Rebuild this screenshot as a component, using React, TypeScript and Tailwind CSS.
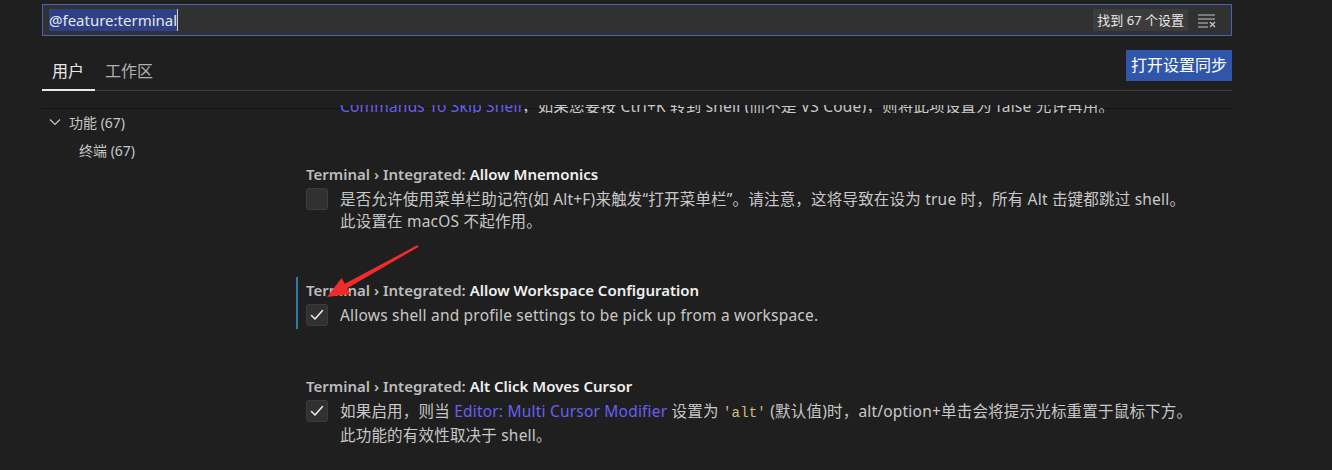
import React from "react";

const font = "font-['Segoe_UI','Noto_Sans','Noto_Sans_CJK_SC',sans-serif]";

const Checkbox = ({ checked }: { checked?: boolean }) => {
  return (
    <div className="w-[22px] h-[22px] shrink-0 rounded-[3px] bg-[#313131] border border-[#3c3c3c] flex items-center justify-center">
      {checked && (
        <svg width="16" height="16" viewBox="0 0 16 16" fill="none">
          <path d="M2.5 8.5 L6 12 L13.5 3.5" stroke="#e8e8e8" strokeWidth="1.6" strokeLinecap="round" strokeLinejoin="round" />
        </svg>
      )}
    </div>
  );
};

const Setting = ({
  name,
  focused,
  checked,
  lines,
}: {
  name: string;
  focused?: boolean;
  checked?: boolean;
  lines: React.ReactNode[];
}) => {
  return (
    <div className={`border-l-2 pl-[8px] py-[3px] ${focused ? "border-[#2a7ca3]" : "border-transparent"}`}>
      <div className="h-[20px] leading-[20px] text-[15px] whitespace-nowrap">
        <span className="text-[#bdbdbd] font-semibold">Terminal › Integrated: </span>
        <span className="text-[#f0f0f0] font-semibold">{name}</span>
      </div>
      <div className="mt-[4px] flex gap-[12px]">
        <div>
          <Checkbox checked={checked} />
        </div>
        <div className="text-[15.5px] leading-[22px] text-[#c8c8c8] tracking-[0.2px]">
          {lines.map((l, i) => (
            <div key={i} className="whitespace-nowrap">
              {l}
            </div>
          ))}
        </div>
      </div>
    </div>
  );
};

export default function App() {
  return (
    <div className={`relative w-[1332px] h-[470px] overflow-hidden bg-[#1f1f1f] ${font}`}>
      <div className="ml-[42px] w-[1190px] pt-[4px]">
        {/* search box */}
        <div className="h-[32px] border border-[#4d5fb8] bg-[#313131] flex items-center pl-[6px] pr-[14px]">
          <div className="flex items-center flex-1">
            <span className="bg-[#2e4086] text-[#e6e6e6] text-[15px] leading-[22px]">@feature:terminal</span>
            <span className="w-px h-[22px] bg-[#d0d0d0]" />
          </div>
          <span className="bg-[#3c3c3c] text-[#e8e8e8] text-[13px] leading-[22px] px-[4px]">找到 67 个设置</span>
          <svg className="ml-[9px]" width="20" height="16" viewBox="0 0 20 16" fill="none">
            <path d="M1 3h17M1 7h17M1 11h10M1 15h10" stroke="#c5c5c5" strokeWidth="1.2" />
            <path d="M13 10l5 5M18 10l-5 5" stroke="#c5c5c5" strokeWidth="1.3" />
          </svg>
        </div>

        {/* tabs row */}
        <div className="h-[55px] flex items-end justify-between border-b border-[#3c3c3c]">
          <div className="flex">
            <div className="pl-[10px] pr-[11px] pb-[8px] border-b-2 border-[#e7e7e7] -mb-px text-[16px] leading-[20px] text-[#e7e7e7]">用户</div>
            <div className="px-[10px] pb-[8px] text-[16px] leading-[20px] text-[#b0b0b0]">工作区</div>
          </div>
          <div className="mb-[9px] h-[31px] px-[5px] bg-[#2f56ab] text-white text-[16px] leading-[31px]">打开设置同步</div>
        </div>

        {/* body */}
        <div className="relative flex">
          <div className="absolute left-0 right-0 top-[17px] h-px bg-[#141414]" />
          <div className="w-[254px] shrink-0 pt-[17px] text-[14px] text-[#c8c8c8]">
            <div className="h-[28px] flex items-center gap-[7px] pl-[6px]">
              <svg width="14" height="14" viewBox="0 0 14 14" fill="none">
                <path d="M2 4.5l5 5 5-5" stroke="#c5c5c5" strokeWidth="1.2" />
              </svg>
              <span>功能 (67)</span>
            </div>
            <div className="h-[28px] flex items-center pl-[37px]">终端 (67)</div>
          </div>

          <div className="flex-1">
            <div className="relative h-[22px] overflow-hidden">
              <div className="mt-[4px] pl-[44px] text-[15.5px] leading-[22px] text-[#c8c8c8] whitespace-nowrap tracking-[0.2px]">
                <span className="text-[#6a5ef0]">Commands To Skip Shell</span>，如果您要按 Ctrl+K 转到 shell (而不是 VS Code)，则将此项设置为 false 允许再用。
              </div>
              <div className="absolute left-0 right-0 top-0 h-[14px] bg-[#1f1f1f]" />
            </div>

            <div className="mt-[48px]">
              <Setting
                name="Allow Mnemonics"
                lines={[
                  "是否允许使用菜单栏助记符(如 Alt+F)来触发“打开菜单栏”。请注意，这将导致在设为 true 时，所有 Alt 击键都跳过 shell。",
                  "此设置在 macOS 不起作用。",
                ]}
              />
            </div>
            <div className="mt-[42px]">
              <Setting
                name="Allow Workspace Configuration"
                focused
                checked
                lines={["Allows shell and profile settings to be pick up from a workspace."]}
              />
            </div>
            <div className="mt-[44px]">
              <Setting
                name="Alt Click Moves Cursor"
                checked
                lines={[
                  <>
                    如果启用，则当 <span className="text-[#6a5ef0]">Editor: Multi Cursor Modifier</span> 设置为{" "}
                    <span className="font-['Liberation_Mono',monospace] text-[14px] text-[#d7ba7d]">'alt'</span> (默认值)时，alt/option+单击会将提示光标重置于鼠标下方。
                  </>,
                  "此功能的有效性取决于 shell。",
                ]}
              />
            </div>
          </div>
        </div>
      </div>

      {/* red annotation arrow */}
      <svg className="absolute left-0 top-0 pointer-events-none" width="1332" height="470">
        <polygon
          points="327,297 350.4,293.9 347.2,288.2 418.5,246.9 417.5,245.1 344.8,283.8 341.6,278.1"
          fill="#f22a2a"
        />
      </svg>
    </div>
  );
}
